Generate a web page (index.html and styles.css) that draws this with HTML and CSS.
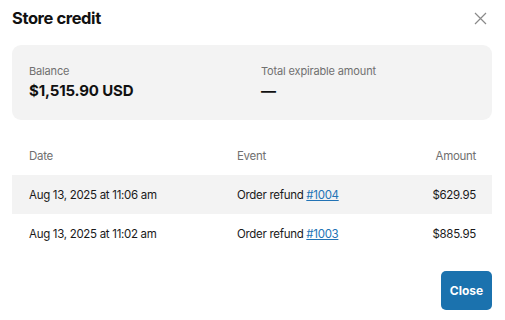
FILE: index.html
```
<!DOCTYPE html>
<html lang="en">
<head>
    <meta charset="UTF-8">
    <meta name="viewport" content="width=device-width, initial-scale=1.0">
    <title>Store credit</title>
    <link rel="stylesheet" href="styles.css">
</head>
<body>
    <div class="modal">
        <div class="modal-header">
            <h1>Store credit</h1>
            <button class="close-x" aria-label="Close">
                <svg width="13" height="13" viewBox="0 0 13 13">
                    <path d="M1 1L12 12M12 1L1 12" stroke="#8a8a8a" stroke-width="1.2" fill="none"/>
                </svg>
            </button>
        </div>

        <div class="summary">
            <div class="stat">
                <span class="label">Balance</span>
                <span class="value">$1,515.90 USD</span>
            </div>
            <div class="stat">
                <span class="label">Total expirable amount</span>
                <span class="value">&mdash;</span>
            </div>
        </div>

        <table class="history">
            <thead>
                <tr>
                    <th>Date</th>
                    <th>Event</th>
                    <th class="num">Amount</th>
                </tr>
            </thead>
            <tbody>
                <tr class="shaded">
                    <td>Aug 13, 2025 at 11:06 am</td>
                    <td>Order refund <a href="#">#1004</a></td>
                    <td class="num">$629.95</td>
                </tr>
                <tr>
                    <td>Aug 13, 2025 at 11:02 am</td>
                    <td>Order refund <a href="#">#1003</a></td>
                    <td class="num">$885.95</td>
                </tr>
            </tbody>
        </table>

        <div class="modal-footer">
            <button class="close-btn">Close</button>
        </div>
    </div>
</body>
</html>
```

FILE: styles.css
```
body {
    font-family: Inter, "Noto Sans", sans-serif;
    margin: 0;
    background: white;
    color: #1a1a1a;
}
.modal {
    padding: 0 13px 0 12px;
}
.modal-header {
    display: flex;
    justify-content: space-between;
    align-items: center;
    height: 36px;
}
.modal-header h1 {
    font-size: 16.5px;
    font-weight: 700;
    letter-spacing: -0.4px;
    margin: 0;
    color: #111;
}
.close-x {
    background: none;
    border: none;
    padding: 0;
    margin-right: 5px;
    display: flex;
    cursor: pointer;
}
.summary {
    margin-top: 9px;
    background: #f3f3f3;
    border-radius: 9px;
    padding: 18px 17px 18px;
    display: grid;
    grid-template-columns: 232px 1fr;
}
.stat {
    display: flex;
    flex-direction: column;
}
.label {
    font-size: 11px;
    letter-spacing: -0.15px;
    color: #707070;
    line-height: 16px;
}
.value {
    font-size: 15px;
    font-weight: 700;
    letter-spacing: -0.15px;
    line-height: 22px;
    margin-top: 1px;
    color: #111;
}
.history {
    width: 100%;
    border-collapse: collapse;
    margin-top: 16px;
    font-size: 11.5px;
    letter-spacing: -0.3px;
}
.history th {
    font-weight: 400;
    color: #707070;
    text-align: left;
    height: 39px;
    padding: 0 17px;
}
.history td {
    height: 39px;
    padding: 0 17px;
    color: #1a1a1a;
}
.history th:nth-child(1),
.history td:nth-child(1) {
    width: 174px;
}
.history .num {
    text-align: right;
    padding-right: 16px;
}
.history tr.shaded td {
    background: #f3f3f3;
}
.history a {
    color: #2273b5;
}
.modal-footer {
    display: flex;
    justify-content: flex-end;
    margin-top: 18px;
}
.close-btn {
    background: #1b72ae;
    color: white;
    border: none;
    border-radius: 5px;
    font-family: inherit;
    font-size: 12px;
    font-weight: 700;
    width: 51px;
    height: 39px;
    cursor: pointer;
}
```
